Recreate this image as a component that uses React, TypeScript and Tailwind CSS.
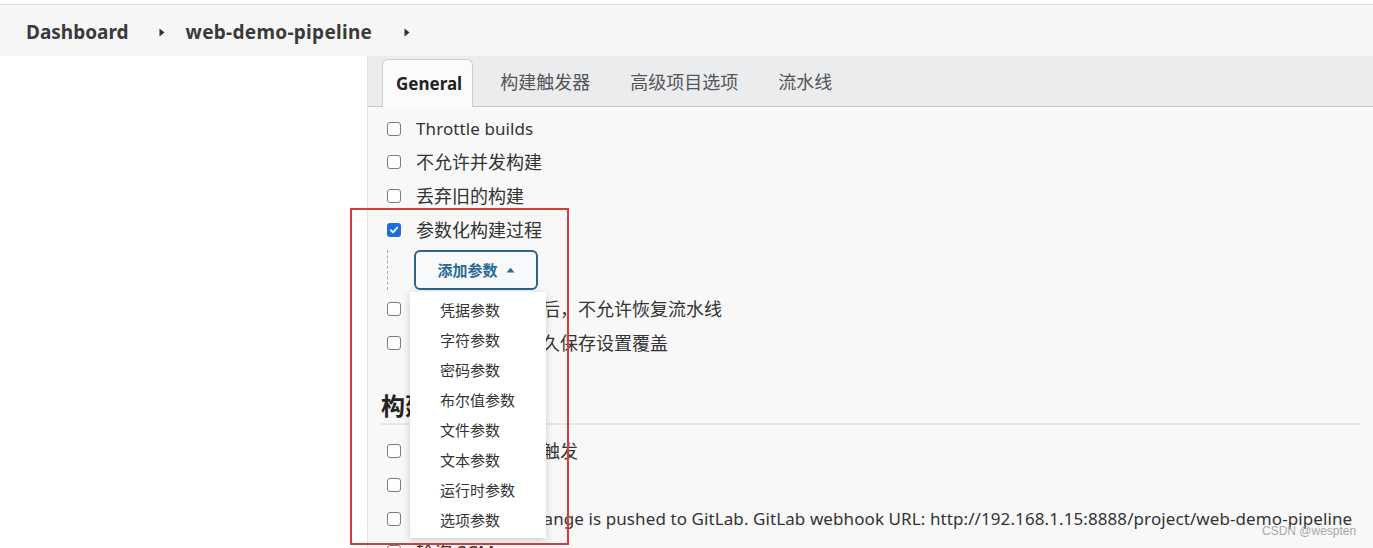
import React from "react";

const FONT = { fontFamily: '"Noto Sans", "Noto Sans CJK SC", sans-serif' };

function Box({ checked = false }: { checked?: boolean }) {
  if (checked) {
    return (
      <span className="flex h-[14px] w-[14px] shrink-0 items-center justify-center rounded-[3px] bg-[#1a6fe0]">
        <svg width="10" height="10" viewBox="0 0 10 10">
          <path d="M1.8 5.2 L4 7.3 L8.3 2.6" fill="none" stroke="white" strokeWidth="1.8" strokeLinecap="round" strokeLinejoin="round" />
        </svg>
      </span>
    );
  }
  return <span className="block h-[14px] w-[14px] shrink-0 rounded-[3px] border-[1.5px] border-[#7d7d7d] bg-white" />;
}

function Row({ children, checked = false, latin = false }: { children: React.ReactNode; checked?: boolean; latin?: boolean }) {
  return (
    <div className="flex h-[33.6px] items-center pl-[6px]">
      <Box checked={checked} />
      <span className={`ml-[15px] whitespace-nowrap text-[#333] ${latin ? "text-[17px] tracking-[0.09px]" : "text-[18px]"} leading-[24px]`}>{children}</span>
    </div>
  );
}

function Caret() {
  return (
    <svg width="6" height="9" viewBox="0 0 6 9" className="shrink-0">
      <path d="M0.5 0.5 L5.5 4.5 L0.5 8.5 Z" fill="#333" />
    </svg>
  );
}

const items = ["凭据参数", "字符参数", "密码参数", "布尔值参数", "文件参数", "文本参数", "运行时参数", "选项参数"];

export default function App() {
  return (
    <div className="relative h-[548px] w-[1373px] overflow-hidden bg-white" style={FONT}>
      {/* breadcrumb */}
      <div className="mt-[4px] flex h-[52px] items-center border-t border-[#dcdcdc] bg-[#f6f6f6] pl-[26px] pt-[4px]">
        <span className="text-[19px] font-bold leading-none text-[#3a3a3a]">Dashboard</span>
        <span className="ml-[30px] mr-[21px]"><Caret /></span>
        <span className="text-[19px] font-bold leading-none tracking-[0.3px] text-[#3a3a3a]">web-demo-pipeline</span>
        <span className="ml-[32px]"><Caret /></span>
      </div>

      <div className="flex">
        <div className="w-[367px] shrink-0 bg-white" />
        <div className="h-[500px] flex-1 border-l border-[#e2e2e2] bg-[#f8f8f8]">
          {/* tabs */}
          <div className="flex h-[51px] items-end gap-[14px] border-b border-[#c9c9c9] bg-[#eaecee] pl-[14px]">
            <div className="-mb-px flex h-[48px] items-center rounded-t-[6px] border border-b-0 border-[#cfcfcf] bg-[#fbfbfb] pl-[13px] pr-[10px]">
              <span className="text-[17px] font-bold text-[#222]">General</span>
            </div>
            <div className="flex h-[48px] items-center px-[13px] text-[18px] text-[#555]">构建触发器</div>
            <div className="flex h-[48px] items-center px-[13px] text-[18px] text-[#555]">高级项目选项</div>
            <div className="flex h-[48px] items-center px-[13px] text-[18px] text-[#555]">流水线</div>
          </div>

          <div className="px-[13px] pt-[5px]">
            <Row latin>Throttle builds</Row>
            <Row>不允许并发构建</Row>
            <Row>丢弃旧的构建</Row>
            <Row checked>参数化构建过程</Row>

            {/* nested params block */}
            <div className="ml-[6px] mt-[4px] border-l border-dashed border-[#a9a9a9] pl-[26px]">
              <div className="relative">
                <button className="flex h-[40px] w-[124px] items-center justify-center gap-[8px] rounded-[6px] border-2 border-[#2f6387] bg-[#f7f9fa] text-[15px] font-bold text-[#2a6b94]">
                  <span>添加参数</span>
                  <svg width="9" height="6" viewBox="0 0 9 6"><path d="M0.5 5.5 L4.5 0.8 L8.5 5.5 Z" fill="#2a6b94" /></svg>
                </button>
                <div className="absolute left-[-4px] top-[42px] z-10 w-[136px] bg-white py-[3px] shadow-[0_2px_8px_rgba(0,0,0,0.18)]">
                  {items.map((t) => (
                    <div key={t} className="flex h-[30px] items-center pl-[30px] text-[15px] text-[#333]">{t}</div>
                  ))}
                </div>
              </div>
            </div>

            <div className="mt-[2px]">
              <Row>如果控制器重启后，不允许恢复流水线</Row>
              <Row>流水线效率、持久保存设置覆盖</Row>
            </div>

            <div className="mt-[30px] border-b-2 border-[#e6e6e6] pb-[1px]">
              <h2 className="text-[24px] font-bold leading-[32px] text-[#222]">构建触发器</h2>
            </div>
            <div className="pt-[10px]">
              <Row>其他工程构建后触发</Row>
              <Row>定时构建</Row>
              <Row latin>Build when a change is pushed to GitLab. GitLab webhook URL: http://192.168.1.15:8888/project/web-demo-pipeline</Row>
              <Row>轮询 SCM</Row>
            </div>
          </div>
        </div>
      </div>

      {/* red highlight box */}
      <div className="pointer-events-none absolute left-[350px] top-[208px] z-20 h-[337px] w-[219px] border-2 border-[#d93a3a]" />

      {/* watermark */}
      <div className="pointer-events-none absolute left-[1262px] top-[525px] z-20 whitespace-nowrap text-[12px] leading-none text-[#a8a8a8]" style={{ fontFamily: '"Liberation Sans", sans-serif' }}>
        CSDN @wespten
      </div>
    </div>
  );
}
